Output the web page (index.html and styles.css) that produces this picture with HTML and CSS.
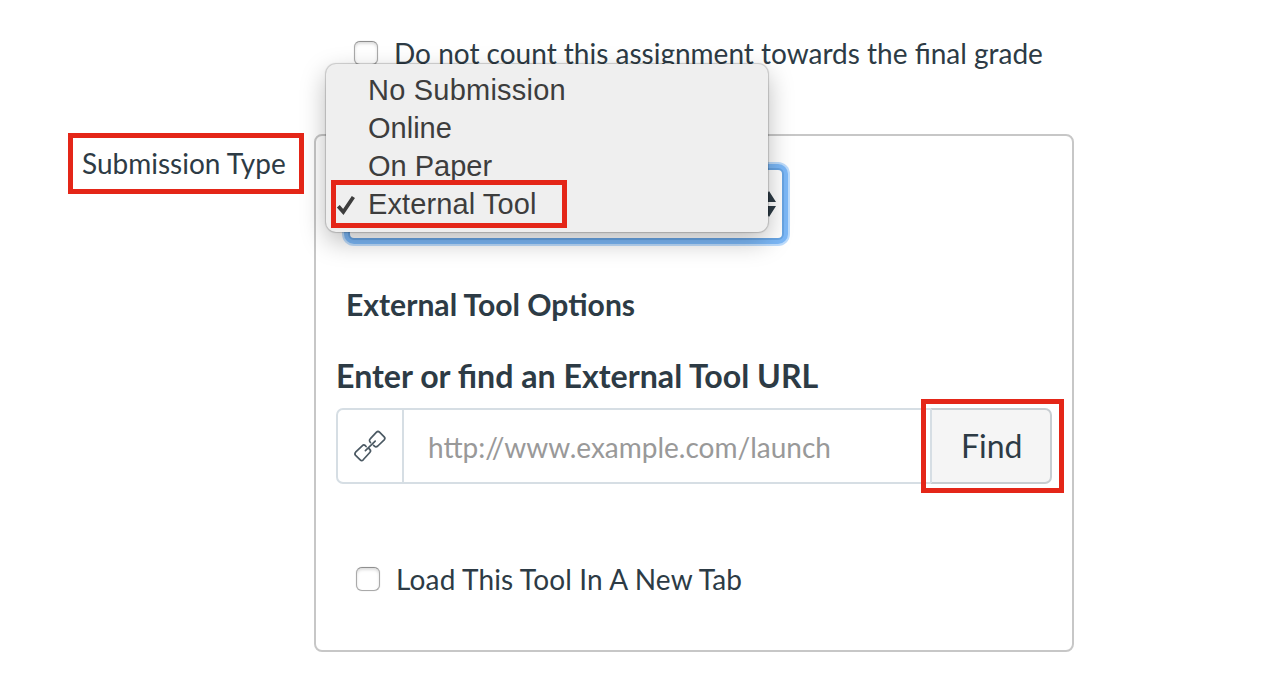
FILE: index.html
```html
<!DOCTYPE html>
<html lang="en">
<head>
<meta charset="utf-8">
<title>Assignment settings</title>
<link rel="stylesheet" href="styles.css">
</head>
<body>
<main class="page">
  <label class="check-row grade-row"><span class="checkbox"></span><span class="grade-text">Do not count this assignment towards the final grade</span></label>
  <div class="form-row">
    <div class="type-label highlight"><span>Submission Type</span></div>
    <section class="panel">
      <div class="select">
        <svg class="arrows" width="16" height="26" viewBox="0 0 16 26"><path d="M8 0L15 11H1ZM1 15H15L8 26Z" fill="#2d3b45"/></svg>
      </div>
      <h3 class="options-title"><span>External Tool Options</span></h3>
      <h2 class="url-title"><span>Enter or find an External Tool URL</span></h2>
      <div class="url-row">
        <div class="link-cell">
          <svg width="34" height="34" viewBox="0 0 34 34" fill="none" stroke="#4b5963" stroke-width="1.7" stroke-linecap="round" stroke-linejoin="round"><path d="M17.5 13.5L16.7 12.5Q16 11 17.2 9.8L23.5 3.2Q25 1.8 26.5 3.2L31.2 7.8Q32.6 9.3 31.2 10.8L24.8 17Q23 18.5 21.5 17.2L20.6 16.3M15.8 19.4L16.8 20.4Q18.3 22 16.8 23.5L10.2 30.8Q8.7 32.3 7.2 30.8L2.6 26.3Q1.2 24.8 2.6 23.2L9.2 16.8Q10.7 15.3 12.2 16.5L13.1 17.5M12.4 21.6L22.2 12.2"/></svg>
        </div>
        <div class="url-input"><span>http://www.example.com/launch</span></div>
        <div class="find"><span>Find</span></div>
      </div>
      <label class="check-row tab-row"><span class="checkbox"></span><span class="tab-text">Load This Tool In A New Tab</span></label>
    </section>
  </div>
  <div class="menu">
    <div class="item"><span class="m1">No Submission</span></div>
    <div class="item"><span class="m2">Online</span></div>
    <div class="item"><span class="m3">On Paper</span></div>
    <div class="item"><svg class="tick" width="20" height="22" viewBox="0 0 20 22" fill="none" stroke="#3d3d3d"><path d="M2.3 11.3L7.3 17L17.4 2" stroke-width="3.8"/></svg><span class="m4">External Tool</span></div>
  </div>
  <div class="highlight mark-option"></div>
  <div class="highlight mark-find"></div>
</main>
</body>
</html>
```
FILE: styles.css
```css
* { box-sizing: border-box; }
body { margin: 0; background: #fff; }
.page {
  position: relative;
  width: 1274px;
  height: 692px;
  padding-top: 33px;
  overflow: hidden;
  font: 28px/40px Lato, sans-serif;
  color: #2d3b45;
  white-space: nowrap;
}
.check-row { display: flex; align-items: center; height: 40px; }
.checkbox {
  width: 24px;
  height: 24px;
  margin-right: 16px;
  border: 1px solid #aaa;
  border-top-color: #8f8f8f;
  border-radius: 6px;
  background: #fff;
  box-shadow: inset 0 2px 3px #ddd, 0 0 1px #bbb;
}
.grade-row { margin-left: 354px; margin-bottom: 60px; }
.form-row { display: flex; align-items: flex-start; padding-left: 68px; }
.highlight { border: 5px solid #e42618; }
.type-label { width: 236px; height: 61px; padding: 5px 0 0 9px; margin-right: 10px; }
.panel {
  width: 760px;
  height: 518px;
  margin-top: 1px;
  padding: 32px 20px 0;
  border: 2px solid #c7c7c7;
  border-radius: 8px;
}
.select {
  display: flex;
  align-items: center;
  justify-content: flex-end;
  width: 436px;
  height: 72px;
  margin-left: 12px;
  padding-right: 5px;
  border: 2px solid #68a5e4;
  border-radius: 6px;
  background: #fff;
  box-shadow: 0 0 0 4px #7cb8f7, 0 0 0 6px #bddcfc;
}
h2, h3 { margin: 0; font-weight: 700; }
.options-title { margin: 44px 0 0 10px; font-size: 30.1px; line-height: 40px; }
.url-title { margin: 32px 0 0 0; font-size: 32.15px; line-height: 40px; }
.url-row { display: flex; width: 716px; height: 76px; margin-top: 12px; }
.link-cell {
  display: flex;
  align-items: center;
  justify-content: center;
  width: 68px;
  border: 2px solid #d6dee4;
  border-radius: 7px 0 0 7px;
}
.url-input {
  width: 526px;
  padding: 17px 0 0 24px;
  border: 2px solid #d6dee4;
  border-width: 2px 0;
  color: #999;
}
.find {
  width: 122px;
  padding: 16px 0 0 29px;
  border: 2px solid #c7cdd1;
  border-left-color: #d6dee4;
  border-radius: 0 7px 7px 0;
  background: #f5f5f5;
  font-size: 32px;
}
.tab-row { margin: 75px 0 0 20px; }
.tab-text { letter-spacing: .16px; }
.menu {
  position: absolute;
  left: 326px;
  top: 64px;
  width: 442px;
  height: 168px;
  padding-top: 7px;
  border-radius: 10px;
  background: #efefef;
  box-shadow: 0 0 1px 1px rgba(0,0,0,.18), 0 9px 26px rgba(0,0,0,.27);
  color: #3d3d3d;
  font: 29px/38px "Liberation Sans", Arial, sans-serif;
}
.item { position: relative; height: 38px; padding-left: 42px; }
.m1 { letter-spacing: .22px; }
.m4 { letter-spacing: .1px; }
.tick { position: absolute; left: 10px; top: 10px; }
.mark-option { position: absolute; left: 331px; top: 180px; width: 236px; height: 48px; }
.mark-find { position: absolute; left: 921px; top: 399px; width: 143px; height: 94px; }
```
